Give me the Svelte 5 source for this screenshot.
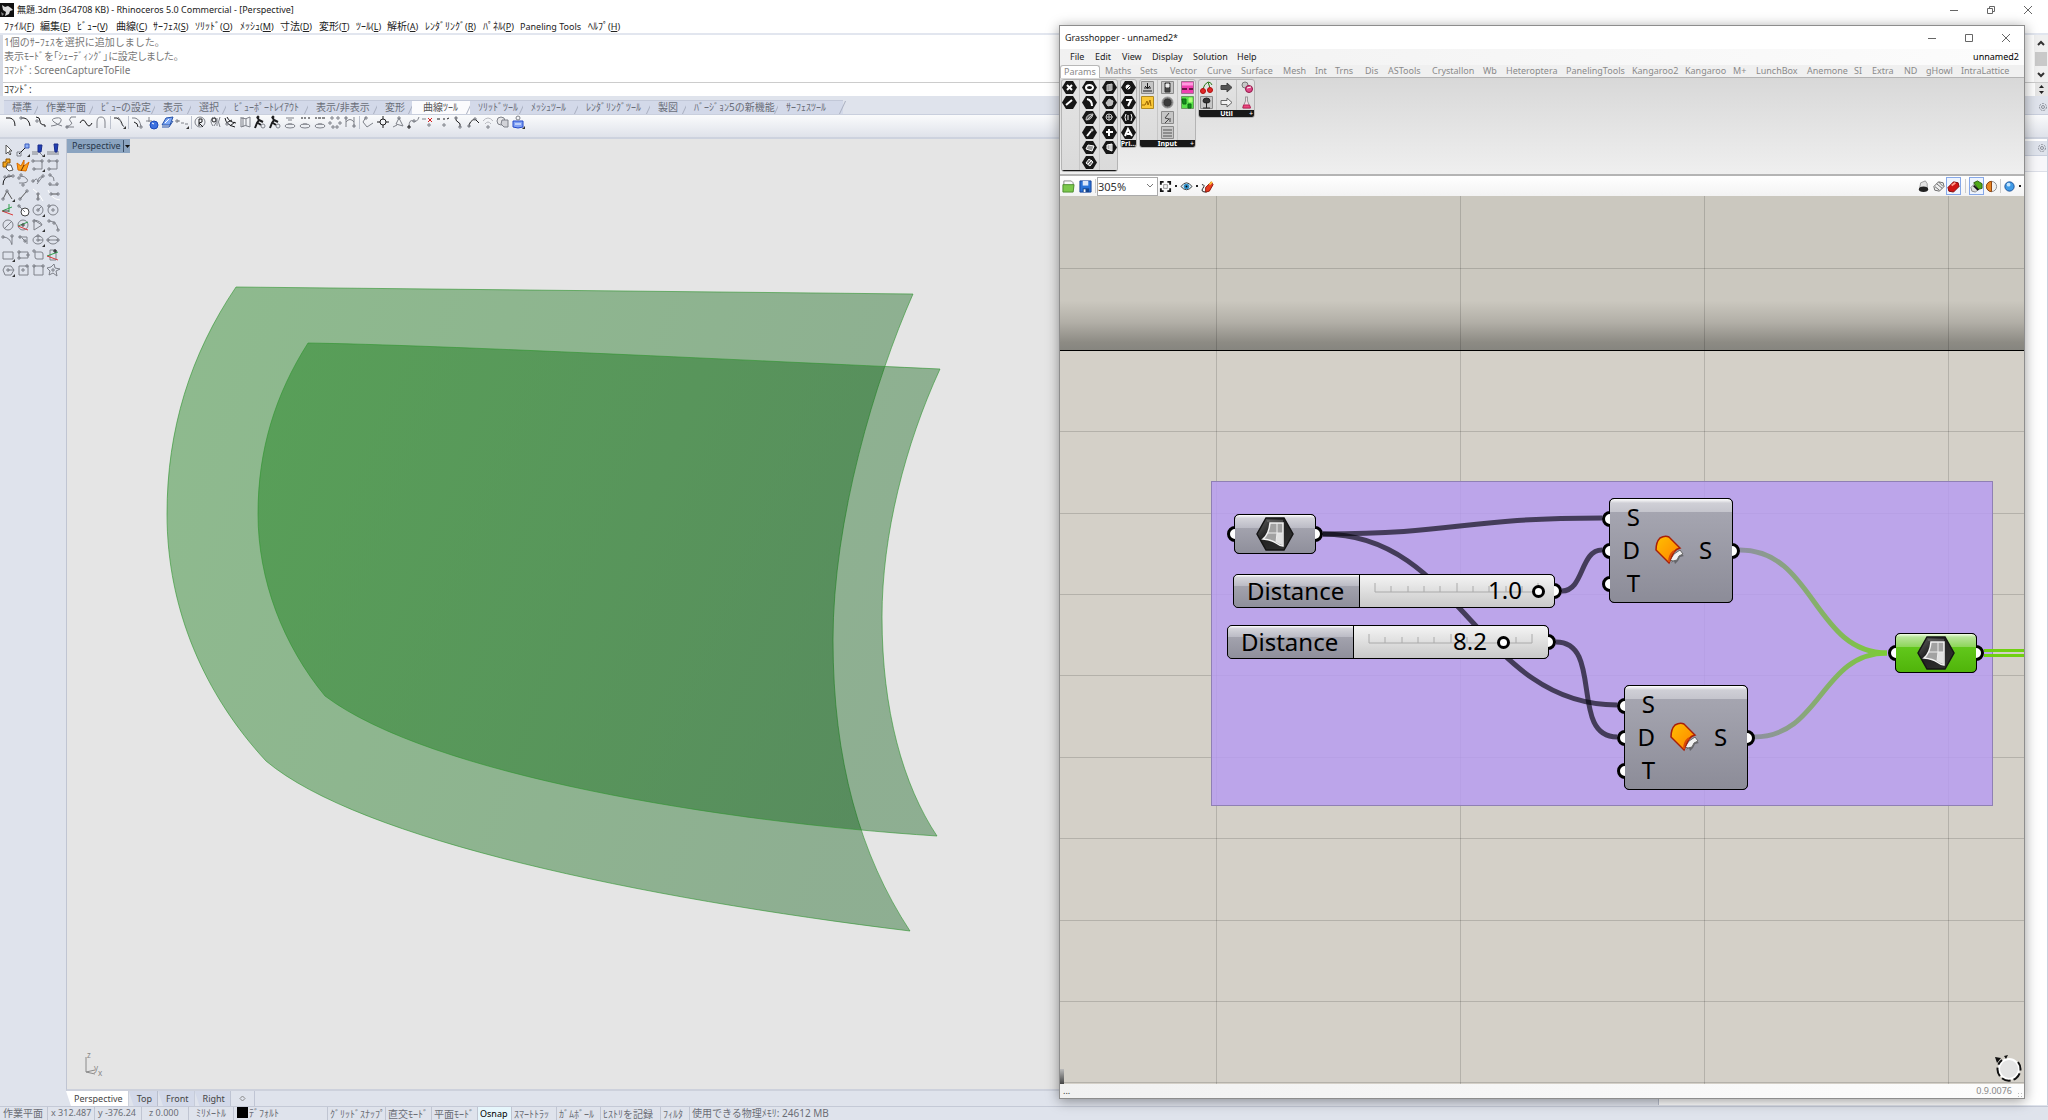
<script>
  const circ = (x, y, r) => `M${x - r} ${y}a${r} ${r} 0 1 0 ${2 * r} 0a${r} ${r} 0 1 0 ${-2 * r} 0`;
  const sq = (x, y, r = 1) => `M${x - r} ${y - r}h${2 * r}v${2 * r}h${-2 * r}z`;
  const G = '#7e8189';
  const K = '#1c1c1e';
  const corner = ['M14 11v3h-3z', 'none', '#333'];

  const mainMenu = [
    ['ﾌｧｲﾙ', 'F', 36], ['編集', 'E', 37], ['ﾋﾞｭｰ', 'V', 39], ['曲線', 'C', 37], ['ｻｰﾌｪｽ', 'S', 42],
    ['ｿﾘｯﾄﾞ', 'O', 45], ['ﾒｯｼｭ', 'M', 40], ['寸法', 'D', 39], ['変形', 'T', 37], ['ﾂｰﾙ', 'L', 31],
    ['解析', 'A', 38], ['ﾚﾝﾀﾞﾘﾝｸﾞ', 'R', 58], ['ﾊﾟﾈﾙ', 'P', 37], ['', 'Paneling Tools', 68], ['ﾍﾙﾌﾟ', 'H', 40]
  ];

  const toolTabs = [
    ['標準', 34], ['作業平面', 55], ['ﾋﾞｭｰの設定', 62], ['表示', 36], ['選択', 35],
    ['ﾋﾞｭｰﾎﾟｰﾄﾚｲｱｳﾄ', 82], ['表示/非表示', 69], ['変形', 35], ['曲線ﾂｰﾙ', 58],
    ['ｿﾘｯﾄﾞﾂｰﾙ', 53], ['ﾒｯｼｭﾂｰﾙ', 55], ['ﾚﾝﾀﾞﾘﾝｸﾞﾂｰﾙ', 72], ['製図', 36],
    ['ﾊﾞｰｼﾞｮﾝ5の新機能', 92], ['ｻｰﾌｪｽﾂｰﾙ', 65]
  ];

  const arc = ['M2 3h4q5 1 5 8', K];
  const curveTools = [
    [arc], [['M2 3h3q5 1 6 8', K], [sq(2, 3), G]],
    [['M2 2q4 0 4 4t5 4v2', K], [sq(3, 6), G]],
    [['M2 11q9-1 10-5t-5-3-2 4 8 4', G]],
    [['M12 2H7q-3 3 0 5t-5 5h8', G], [sq(3, 12), G]],
    [['M1 8q3-6 6 0t6 0', K]],
    [['M3 13V7q0-5 4-5t4 5v6', G]],
    null,
    [['M2 3h3q4 1 6 8', K], ['M6 2l3 4M9 8l3 4', G], corner],
    null,
    [['M2 3h3q5 1 6 9', G], ['M4 7q4 1 4 5', K], [sq(11, 12), G]],
    [[circ(9, 10, 4), '#1c48b8', '#3c70e0'], ['M4 2v5M1 6h6', G], ['M7 8l2 1', '#fff']],
    [['M2 10l4-7 7-1-3 8z', '#2450a8', '#7ea8f4'], ['M2 12h7l4-6', '#2450a8'], ['M5 8l4-4', '#fff']],
    [['M2 6h3M6 8h3M10 9h3', G], [sq(2, 6), G], corner],
    null,
    [[circ(7, 7, 5), G], ['M6 11V4h3v3l-3 1 4 4', K]],
    [['M6 2q5 2 0 9M5 2q-4 4 0 9', G], [circ(6, 5, 2), K], ['M9 3v8M12 2q-3 5 0 10', G]],
    [['M2 3q1 7 10 9M4 2q2 5 9 6M3 8l6-3M7 11l5-4', K], [sq(4, 9), G]],
    [['M3 2v10M5 2v10M3 3q5 2 9-1v10q-5-3-9 0M8 3v8', G]],
    [['M4 2l2 3-2 3-2 5M6 5l4 2M5 8l3 2', K, 'none', 2], [circ(10, 11, 2), G], [circ(5, 2, 1), K, K]],
    [['M4 2l2 3-2 3-2 5M6 5l4 2M5 8l3 2', K, 'none', 2], [circ(10, 11, 2), G], [circ(5, 2, 1), K, K]],
    [['M3 3h8M5 5h4', G], ['M2 11a5 2 0 1 0 10 0a5 2 0 1 0-10 0M5 9h4', G]],
    [['M3 3h2M6 3h2M10 3h2', K], ['M2 11a5 2 0 1 0 10 0a5 2 0 1 0-10 0M5 9h4', G]],
    [['M2 3h2M5 3h3M9 3h3', K], ['M2 11a5 2 0 1 0 10 0a5 2 0 1 0-10 0M5 9h4', G]],
    [[sq(4, 3), G], [sq(10, 3), G], [sq(2, 8), G], [sq(12, 8), G], [sq(5, 12), G], [sq(9, 12), G]],
    [['M3 2v10M11 2v10M3 7q4-5 8 0', G], [sq(3, 3), G], [sq(11, 11), G]],
    null,
    [['M5 2L2 7l4 5 6-4', G], [sq(5, 3), G]],
    [[circ(7, 7, 3), K], ['M1 7h3M10 7h3M7 1v3M7 10v3', K]],
    [['M8 3L5 9l7 2zM2 12l4-2', G], [sq(8, 3), G]],
    [['M3 12q0-8 4-6t6-4', G], [sq(3, 12), K], [sq(8, 6), G]],
    [['M1 4h4', G], [sq(8, 10), G], ['M7 3l4 4M11 3l-4 4', '#d81c1c']],
    [['M1 4h3M7 4h2M11 4l2-1', K], [sq(8, 10), G]],
    [['M5 2q-1 4 2 5t2 5', K], [sq(5, 3), G], [sq(9, 12), G]],
    [['M3 12q0-6 6-8l4 4', K], [sq(3, 11), G], [sq(9, 4), G]],
    [['M2 6q5-6 10 0M4 9q3-4 6 0', '#b8bac0'], [sq(7, 12), G]],
    [[circ(5, 6, 4), G, '#e8e8ea'], ['M6 5h6v7H8l-3-3z', G, '#d2d3d8']],
    [['M2 6h10v6q-5 2-10 0z', '#2448c8', '#7fa0f4'], ['M4 9h6', '#fff'], [circ(7, 3, 2), G], corner]
  ];

  const sideTools = [
    [['M5 2v9l2-2 2 3 1-1-2-3h3z', '#555', '#fff']],
    [['M3 11l7-7', K], ['M9 1h4v4H9z', '#3a5cc0', '#8fb0f4'], [sq(3, 11, 2), G], corner],
    [['M1 9h7l4 4M1 11h6', G], ['M7 2h4l-1 7H7z', '#1a2a88', '#1f3fb4'], corner],
    [['M1 9h12M1 11h12', G], ['M8 1h4l-1 8H9z', '#1a2a88', '#1f3fb4']],
    [['M2 4h3V1h4v4H6v4H2z', '#8a5200', '#f4a51c'], ['M6 7h4l2 5-4 1-3-3z', '#555', '#fff']],
    [['M2 12L1 5l4 3 3-6v6l5-4-3 9z', '#d86a00', '#ffa014'], ['M5 13l3-6', '#663300']],
    [['M2 3h9v8H3', G], [sq(2, 3), G], [sq(11, 3), G], [sq(3, 11), G], corner],
    [['M3 3h8v8H3', G], [sq(3, 3), G], [sq(11, 3), G], [sq(3, 11), G]],
    [['M2 12q0-9 9-9', K], [sq(4, 4), G], [sq(12, 3), G], [sq(8, 3), G]],
    [['M3 10h5q5-1 3-4t-7-3', G], [sq(3, 5), G], [sq(7, 12), G], [sq(5, 2), G]],
    [['M2 9q4-6 5 0 0-6 5-5M6 11l6-8', G], [sq(2, 8), G], [sq(12, 3), G]],
    [['M4 2q5 2 4 6M3 12h9', G], [sq(4, 2), G], [sq(4, 11), G], [sq(11, 11), G]],
    [['M2 11l4-8 5 8', '#555'], [sq(2, 11), G], [sq(6, 3), G], corner],
    [['M4 11l7-8', '#555'], [sq(4, 11), G], [sq(11, 3), G]],
    [['M2 1q6 3 10 12', '#fff'], ['M7 5v7', '#555'], [sq(7, 6), G], [sq(7, 11), G]],
    [['M2 2q3 9 12 10', '#fff'], ['M5 6h7', '#555'], [sq(5, 6), G], [sq(12, 6), G]],
    [['M1 8l10-4M8 1v8', '#2f9e4a'], ['M1 8l11 4', '#d83a3a'], ['M2 8h6', '#444']],
    [[circ(9, 9, 4), '#444', '#fff'], ['M2 2l7 7', G], [sq(3, 3), G]],
    [[circ(7, 7, 5), G], ['M7 7l4-4', G], [sq(7, 7), G], corner],
    [[circ(7, 7, 5), G], [sq(7, 7), G], [sq(3, 3), G]],
    [[circ(7, 7, 5), G], ['M3 11l8-8', G]],
    [[circ(7, 7, 5), G], ['M2 8l10-4', '#2f9e4a'], ['M2 8l10 4', '#d83a3a'], [sq(7, 7), '#444']],
    [['M3 2v10l8-5zM3 2q7 1 8 5', G], [sq(3, 3), G], corner],
    [['M3 3q8 0 9 9', G], [sq(3, 3), G], [sq(8, 5), G], [sq(12, 12), G]],
    [['M2 4q7 0 9 8M11 3v8', G], [sq(11, 3), G], [sq(2, 4), G]],
    [['M3 4h8v7M6 5l4 4', G], [sq(4, 4), G], [sq(9, 8), G]],
    [['M2 7a5 4 0 1 0 10 0a5 4 0 1 0-10 0M7 7h5', G], [sq(7, 7), G], [sq(7, 3), G], corner],
    [['M2 7a5 4 0 1 0 10 0a5 4 0 1 0-10 0M2 7h10', G], [sq(2, 7), G], [sq(12, 7), G]],
    [['M2 4h10v7H2z', G], corner],
    [['M3 4h9v6H3z', G], [sq(3, 4), G], [sq(12, 7), G], [sq(3, 10), G]],
    [['M4 4h6q2 0 2 2v5H6q-2 0-2-2z', G], [sq(3, 3), G]],
    [['M4 2h6v10H4z', G], ['M1 8l11-4', '#2f9e4a'], ['M1 8l11 4', '#d83a3a'], [sq(9, 3), K]],
    [['M4 3h6l3 4-3 5H4L2 7z', G], ['M7 7h6', G], [sq(7, 7), G], corner],
    [['M3 3h9v9H3z', G], [sq(7, 7), G], [sq(11, 3), G]],
    [['M3 3h9v9H3z', G], [sq(3, 3), G], [sq(12, 3), G]],
    [['M8 1l1 4 5 1-4 2 1 5-4-3-4 2 1-4-3-3 4-1z', G], [sq(7, 7), G]]
  ];

  const viewTabs = ['Top', 'Front', 'Right'];
  const status = [
    ['作業平面', 48], ['x 312.487', 47], ['y -376.24', 47], ['z 0.000', 47, 'mid'], ['ﾐﾘﾒｰﾄﾙ', 45, 'mid']
  ];
  const modes = [
    ['ｸﾞﾘｯﾄﾞｽﾅｯﾌﾟ', 58], ['直交ﾓｰﾄﾞ', 46], ['平面ﾓｰﾄﾞ', 46], ['Osnap', 34, 'on'], ['ｽﾏｰﾄﾄﾗｯ', 45],
    ['ｶﾞﾑﾎﾞｰﾙ', 44], ['ﾋｽﾄﾘを記録', 60], ['ﾌｨﾙﾀ', 29]
  ];

  const ghMenu = [['File', 25], ['Edit', 27], ['View', 30], ['Display', 41], ['Solution', 44], ['Help', 30]];
  const ghTabs = [
    ['Maths', 35], ['Sets', 30], ['Vector', 37], ['Curve', 34], ['Surface', 42], ['Mesh', 32], ['Int', 20],
    ['Trns', 30], ['Dis', 23], ['ASTools', 44], ['Crystallon', 51], ['Wb', 23], ['Heteroptera', 60],
    ['PanelingTools', 66], ['Kangaroo2', 53], ['Kangaroo', 48], ['M+', 23], ['LunchBox', 51], ['Anemone', 47],
    ['SI', 18], ['Extra', 32], ['ND', 22], ['gHowl', 35], ['IntraLattice', 54]
  ];

  const W = '#fff';
  const L = '#c8c8c8';
  const hexes = {
    x: [['M5 5l5 5M10 5l-5 5', W, 'none', 2]],
    line: [['M4 10l6-5', W, 'none', 2]],
    ring: [['M4 7.5a3.5 2.5 0 1 0 7 0a3.5 2.5 0 1 0-7 0', W, 'none', 2]],
    arc: [['M5 4q5 1 5 7', W, 'none', 2]],
    leaf: [['M4 10q0-6 7-6-1 6-7 6zM5 10l5-5', L, '#666']],
    key: [['M5 11l4-5', W, 'none', 2], [circ(10, 5, 1), W]],
    plane: [['M4 9l2-4 6 1-2 5z', W, '#999']],
    diamond: [['M7 4l4 3-3 4-4-3zM6 9l4-4', W, '#777']],
    box: [['M5 5l5-1v6l-5 1zM8 4v7', L, '#999']],
    brep: [['M4 8l3-4 4 2-1 4-4 1z', L, '#bbb']],
    mesh: [[circ(7, 7, 3), L], ['M4 7h7M7 4v7', L]],
    plus: [['M7 4v7M4 7h7', W, 'none', 2]],
    srf: [['M5 5l5-1v7l-5-2zM8 4v6', W, '#aaa']],
    bool: [[circ(7, 7, 2), W, W], ['M6 9l4-4', '#111']],
    seven: [['M5 5h5l-3 6', W, 'none', 2]],
    dom: [['M5 4q-2 3 0 7M10 4q2 3 0 7M7 5v5', W]],
    angle: [['M4 11l3-7 4 7M6 9h4', W, 'none', 2]]
  };
  const frame = ['M1.5 1.5h12v12h-12z', '#8c8c8c', '#c6c6c6'];
  const tile = {
    slider: [frame, ['M4 8h7M7.5 3v5M5 6l2.500 2.500 2.500-2.500M3 11h9', K]],
    swatch: [['M1.500 1.500h12v12h-12z', '#b08a20', '#fac838'], ['M2 10h3l2-4 1 4 2-5 1 6', '#9a6400']],
    toggle: [frame, ['M5 3h5v9H5z', '#333', '#444'], ['M6 4h3v3H6z', '#eee', '#eee']],
    knob: [[circ(7.5, 7.5, 5.5), '#999', '#777'], [circ(7.5, 7.5, 3.5), '#333', '#3a3a3a']],
    pick: [frame, ['M9 3L5 8l4 1-4 4M10 8v4', '#444']],
    list: [frame, ['M3 5h9M3 8h9M3 11h9', '#555']],
    grad: [['M1.500 1.500h12v12h-12z', '#a07090', '#f040b0'], ['M2 4h11', '#ff9adf', 'none', 3], ['M2 9h5M9 9h4', '#70104a', 'none', 2]],
    image: [['M1.500 1.500h12v12h-12z', '#6c9a60', '#58e048'], ['M2 4h4v5H3z', '#0a6a10', '#138c1a'], ['M9 3h3v4H9z', '#a0ff70', '#b6ff80'], ['M8 9h3v4H8z', '#0a6a10', '#138c1a']],
    cherry: [['M4 9q1-5 5-7l2 6M9 2q3 0 4 3', '#2c7a1c'], [circ(4, 11, 2.5), '#b01010', '#e02828'], [circ(11, 10, 2.5), '#b01010', '#e02828']],
    tree: [frame, ['M7.500 7v6M4 6q0-3 3.500-3T11 6q0 2-3.500 2T4 6z', '#222', '#333'], ['M4 13h7', '#222']],
    arrow: [['M2 5.500h6V3l5 4.500-5 4.500V9.500H2z', '#444', '#555']],
    outline: [['M2 5.500h6V3l5 4.500-5 4.500V9.500H2z', '#666', '#f2f2f2']],
    pills: [[circ(6, 5, 3), '#777', '#c8c8c8'], [circ(10, 9, 3.5), '#901848', '#e04888'], ['M8 8l4-1', '#fff']],
    flask: [['M6 2h3M6.500 2v4l-3 7h8l-3-7V2', '#999', '#f4dce6'], ['M4.500 10h6l1 3H4z', '#c02058', '#e8487c']]
  };
  const panels = [
    { name: '', clipped: true, cols: [['x', 'line'], ['ring', 'arc', 'leaf', 'key', 'plane', 'diamond'], ['box', 'brep', 'mesh', 'plus', 'srf']] },
    { name: 'Pri…', cols: [['bool', 'seven', 'dom', 'angle']] },
    { name: 'Input', more: true, cols: [['slider', 'swatch'], ['toggle', 'knob', 'pick', 'list'], ['grad', 'image']] },
    { name: 'Util', more: true, cols: [['cherry', 'tree'], ['arrow', 'outline'], ['pills', 'flask']] }
  ];

  let d1 = $state(1.0);
  let d2 = $state(8.2);
  let zoom = $state('305%');
  const sliders = $derived([
    { id: 'dist-a', max: 1, value: d1, set: (v) => (d1 = v) },
    { id: 'dist-b', max: 10, value: d2, set: (v) => (d2 = v) }
  ]);
  const rows = [72, 154, 235, 317, 398, 479, 561, 642, 724, 805, 886];
  const columns = [156, 400, 644, 888];
</script>

{#snippet icon(shapes)}
  <svg class="ic" viewBox="0 0 15 15" aria-hidden="true">
    {#each shapes as [d, s, f, w]}
      <path {d} stroke={s} fill={f ?? 'none'} stroke-width={w ?? 1} />
    {/each}
  </svg>
{/snippet}

{#snippet surfaceHex()}
  <svg class="hex" viewBox="0 0 38 34" aria-hidden="true">
    <path d="M10 1h18l9 16-9 16H10L1 17z" fill="url(#hexFill)" stroke="#151515" stroke-width="1.5" />
    <path d="M11 4h16" fill="none" stroke="#777" stroke-width="1" />
    <path d="M14 6h13v23q-3 0-7-3t-13-4q6-5 7-16z" fill="#a2a2a2" stroke="#f4f4f4" stroke-width="1.5" />
    <path d="M21 16h5v12q-3-1-6-3z" fill="#e2e2e2" />
    <path d="M21 6v10l-1 9M12 16h15" fill="none" stroke="#ececec" stroke-width="1" />
  </svg>
{/snippet}

{#snippet offset(cls)}
  <div class="node comp {cls}">
    <span class="port in p1"></span><span class="port in p2"></span><span class="port in p3"></span>
    <div class="params"><span>S</span><span>D</span><span>T</span></div>
    <svg class="orange" viewBox="0 0 30 30" aria-hidden="true">
      <path d="M17 28l4-6 5-4 4 3-4 1-2 4-3 3-1-3z" fill="#333" opacity=".5" />
      <path d="M16 25l4-6 6-4 3 4-4 2-2 4-4 1z" fill="#f2f2f2" stroke="#666" stroke-width="1" />
      <path d="M6 3q5-3 9-1l11 11q-4 1-6 4t-5 11L2 15q0-8 4-12z" fill="url(#orangeFill)" stroke="#a81f08" stroke-width="1.5" />
      <path d="M15 27q0-7 5-11" fill="none" stroke="#d84a08" stroke-width="2" />
    </svg>
    <span class="result">S</span>
    <span class="port out p2"></span>
  </div>
{/snippet}

{#snippet winButtons(max)}
  <div class="winbtns">
    <button aria-label="Minimize"><svg viewBox="0 0 10 10"><path d="M1 5.500h8" /></svg></button>
    <button aria-label="Maximize">
      <svg viewBox="0 0 10 10">
        {#if max}<path d="M1.500 1.500h7v7h-7z" />{:else}<path d="M1.500 3.500h5v5h-5zM3.500 3.500v-2h5v5h-2" />{/if}
      </svg>
    </button>
    <button aria-label="Close"><svg viewBox="0 0 10 10"><path d="M1 1l8 8M9 1l-8 8" /></svg></button>
  </div>
{/snippet}

{#snippet gear()}
  <button class="gear" aria-label="Options">
    <svg viewBox="0 0 10 10"><circle cx="5" cy="5" r="3.500" stroke-dasharray="2 1" /><circle cx="5" cy="5" r="1.500" /></svg>
  </button>
{/snippet}

<div class="rhino">
  <header class="title">
    <svg class="logo" viewBox="0 0 14 14" aria-hidden="true">
      <path d="M0 0h14v14H0z" fill="#111" />
      <path d="M2 2l3 2 3-1 3 2 2 2-3 1-1 3-4 2 1-4-3-2z" fill="#ddd" /><path d="M1 9l3 2-2 2z" fill="#888" />
    </svg>
    <span>無題.3dm (364708 KB) - Rhinoceros 5.0 Commercial - [Perspective]</span>
    {@render winButtons(false)}
  </header>
  <nav class="menu">
    {#each mainMenu as [name, key, w]}
      <button style:width="{w}px">{name}{#if name}<small>(<u>{key}</u>)</small>{:else}<small>{key}</small>{/if}</button>
    {/each}
  </nav>

  <section class="command">
    <div class="history">
      <div class="log">
        <p>1個のｻｰﾌｪｽを選択に追加しました。</p>
        <p>表示ﾓｰﾄﾞを「ｼｪｰﾃﾞｨﾝｸﾞ」に設定しました。</p>
        <p>ｺﾏﾝﾄﾞ: ScreenCaptureToFile</p>
      </div>
      <div class="scroll"><svg viewBox="0 0 10 6"><path d="M2 5l3-3 3 3" /></svg><i></i><svg viewBox="0 0 10 6"><path d="M2 1l3 3 3-3" /></svg></div>
    </div>
    <div class="prompt">
      <label for="cmd">ｺﾏﾝﾄﾞ:</label><input id="cmd" autocomplete="off" />
      <div class="spin"><svg viewBox="0 0 7 5"><path d="M1 4l2.500-3L6 4z" /></svg><svg viewBox="0 0 7 5"><path d="M1 1l2.500 3L6 1z" /></svg></div>
    </div>
  </section>

  <nav class="tooltabs">
    {#each toolTabs as [name, w], i}
      <button class:active={i === 8} style:width="{w}px">{name}</button>
    {/each}
    <span class="grow"></span>{@render gear()}
  </nav>
  <div class="toolbar">
    {#each curveTools as t}
      {#if t}<button class="tool" aria-label="Curve tool">{@render icon(t)}</button>{:else}<i class="sep"></i>{/if}
    {/each}
  </div>

  <main class="work">
    <aside class="side">
      {#each sideTools as t}<button class="tool" aria-label="Tool">{@render icon(t)}</button>{/each}
    </aside>
    <section class="center">
      <div class="viewport">
        <button class="vname"><span>Perspective</span><svg viewBox="0 0 7 14"><path d="M.500 1v12" stroke="#3c5068" /><path d="M2 6h5L4.500 9z" fill="#111" /></svg></button>
        <svg class="scene" viewBox="0 0 890 800" aria-hidden="true">
          <defs>
            <linearGradient id="srfFill" x1="0" y1=".2" x2="1" y2=".5"><stop offset="0" stop-color="#007400" /><stop offset=".5" stop-color="#006604" /><stop offset="1" stop-color="#00560a" /></linearGradient>
          </defs>
          <g fill="url(#srfFill)" fill-opacity=".382" stroke="#2f942f" stroke-opacity=".6">
            <path d="M169 148L846 155C808 241 766 381 766 501C766 621 793 716 843 792C573 759 293 701 199 622C138 556 100 471 100 375C100 291 123 216 169 148z" />
            <path d="M241 204C373 206 693 222 873 230C838 306 815 396 815 478C815 571 836 646 870 697C653 683 363 636 258 557C216 506 191 441 191 375C191 311 208 256 241 204z" />
          </g>
        </svg>
        <svg class="axes" viewBox="0 0 24 40" aria-hidden="true">
          <path d="M3 17v15l9-2M3 32l9 2" fill="none" stroke="#8a8a8a" />
          <text x="4" y="18">z</text><text x="11" y="31">y</text><text x="15" y="36">x</text>
        </svg>
      </div>
      <nav class="viewtabs">
        <button class="active">Perspective</button>
        {#each viewTabs as v}<button>{v}</button>{/each}
        <button class="add" aria-label="New viewport"><svg viewBox="0 0 7 9"><path d="M3.500 2L6 4.500 3.500 7 1 4.500z" /></svg></button>
      </nav>
    </section>
    <aside class="props"><div class="phead">{@render gear()}</div><div class="psub"></div></aside>
  </main>

  <footer class="status">
    {#each status as [t, w, c]}<span class={c} style:width="{w}px">{t}</span>{/each}
    <span class="layer"><i></i>ﾃﾞﾌｫﾙﾄ</span>
    {#each modes as [t, w, c]}<button class={c} style:width="{w}px">{t}</button>{/each}
    <span>使用できる物理ﾒﾓﾘ: 24612 MB</span>
  </footer>

  <section class="gh">
    <header class="ghtitle"><span>Grasshopper - unnamed2*</span>{@render winButtons(true)}</header>
    <nav class="ghmenu">
      {#each ghMenu as [t, w]}<button style:width="{w}px">{t}</button>{/each}
      <span class="grow"></span><span class="doc">unnamed2</span>
    </nav>
    <nav class="ghtabs">
      <button class="active">Params</button>
      {#each ghTabs as [t, w]}<button style:width="{w}px">{t}</button>{/each}
    </nav>
    <div class="ribbon">
      {#each panels as p}
        <div class="panel">
          <div class="cols">
            {#each p.cols as col}
              <div class="col">
                {#each col as n}
                  <button class="tool" aria-label={n}>
                    {#if tile[n]}{@render icon(tile[n])}{:else}{@render icon([['M4 1h7l4 6.500-4 6.500H4L0 7.500z', 'none', '#161616'], ...hexes[n]])}{/if}
                  </button>
                {/each}
              </div>
            {/each}
          </div>
          <div class="pname" class:clipped={p.clipped}><b>{p.name}</b>{#if p.more}<em>+</em>{/if}</div>
        </div>
      {/each}
    </div>
    <div class="ghbar">
      <button class="big open" aria-label="Open">
        <svg viewBox="0 0 14 14"><path d="M2 1h8l2 2v6H2z" fill="#f8f8f8" stroke="#888" /><path d="M1 5h12l-1 8H1z" fill="#7cc84c" stroke="#4a8a2a" /></svg>
      </button>
      <button class="big" aria-label="Save">
        <svg viewBox="0 0 14 14"><path d="M1 1h12v12H1z" fill="#2a74d8" stroke="#123f94" /><path d="M4 1h6v5H4z" fill="#dce8fa" /><path d="M4 9h7v4H4z" fill="#14448c" /><path d="M5 10h2v3H5z" fill="#fff" /></svg>
      </button>
      <i class="vsep tight"></i>
      <div class="zoom">
        <select aria-label="Zoom" bind:value={zoom}><option>305%</option><option>100%</option></select>
        <svg viewBox="0 0 8 6" aria-hidden="true"><path d="M1 1l3 3 3-3" /></svg>
      </div>
      <button class="big" aria-label="Zoom extents">
        <svg viewBox="0 0 14 14"><path d="M2 5V2h3M9 2h3v3M12 9v3H9M5 12H2V9" fill="none" stroke="#111" stroke-width="2" /><path d="M5 5h4v4H5z" fill="none" stroke="#333" stroke-dasharray="1 1" /></svg>
      </button><b class="dot"></b>
      <button class="big" aria-label="Preview">
        <svg viewBox="0 0 14 14"><path d="M1 7q6-8 12 0-6 7-12 0z" fill="#dff0fa" stroke="#333" /><circle cx="7" cy="7" r="3" fill="#2f8fc8" /><circle cx="7" cy="7" r="1" /></svg>
      </button><b class="dot"></b>
      <button class="big" aria-label="Sketch">
        <svg viewBox="0 0 14 14"><path d="M1 5q4 0 1 4t4 4" fill="none" stroke="#111" /><path d="M5 8l6-6 2 3-4 7-4 1z" fill="#e83c20" stroke="#8a1408" /><path d="M9 5l3-3" stroke="#ffc23a" stroke-width="2" /></svg>
      </button>
      <span class="grow"></span>
      <button class="big" aria-label="No preview">
        <svg viewBox="0 0 14 14"><path d="M3 8l1-5 5-2 2 3v5z" fill="#e4e4e4" stroke="#999" /><ellipse cx="7" cy="10" rx="5" ry="3" fill="#222" /></svg>
      </button>
      <button class="big" aria-label="Wireframe">
        <svg viewBox="0 0 14 14"><path d="M2 7l5-5 5 1 1 4-5 5-5-1zM5 4l6 5M3 7l5 4M7 2l5 5" fill="#eee" stroke="#666" /></svg>
      </button>
      <button class="big on" aria-label="Shaded">
        <svg viewBox="0 0 14 14"><path d="M1 8l6-6 5 1 1 4-6 6-5-1z" fill="#d01414" stroke="#7a0606" /><path d="M5 6l4-3" stroke="#ff9a8a" stroke-width="2" /></svg>
      </button>
      <i class="vsep"></i>
      <button class="big on" aria-label="Selected preview">
        <svg viewBox="0 0 14 14"><path d="M1 8l4-4 5 5-4 4-4-1z" fill="#ddd" stroke="#888" /><path d="M4 3l4-2 5 3v5l-4 1-2-3z" fill="#4fa818" stroke="#2a5c0a" /><path d="M4 6l5 5" stroke="#111" stroke-width="2" /></svg>
      </button>
      <button class="big" aria-label="Document preview">
        <svg viewBox="0 0 14 14"><circle cx="7" cy="7" r="5.500" fill="#f0f0f0" stroke="#888" /><path d="M7 1.500a5.500 5.500 0 0 0 0 11z" fill="#e88420" stroke="#8a3c08" /></svg>
      </button>
      <i class="vsep thin"></i>
      <button class="big" aria-label="Mesh quality">
        <svg viewBox="0 0 14 14"><circle cx="7" cy="7" r="5" fill="#3f9ae6" stroke="#1c4f94" /><circle cx="6" cy="5" r="2" fill="#c4e6ff" /></svg>
      </button><b class="dot"></b>
    </div>

    <div class="canvas">
      <div class="shade"></div>
      <svg class="grid" aria-hidden="true">
        {#each rows as y}<line x1="0" x2="100%" y1={y} y2={y} />{/each}
        {#each columns as x}<line x1={x} x2={x} y1="0" y2="100%" />{/each}
      </svg>
      <div class="group"></div>
      <svg class="wires" aria-hidden="true">
        <defs>
          <linearGradient id="w1" x1="0" x2="1"><stop offset="0" stop-color="#8e90a0" /><stop offset=".4" stop-color="#88a878" /><stop offset="1" stop-color="#7ccc34" /></linearGradient>
          <linearGradient id="hexFill" x1="0" y1="0" x2="1" y2="1"><stop offset="0" stop-color="#666" /><stop offset=".4" stop-color="#222" /><stop offset="1" stop-color="#333" /></linearGradient>
          <linearGradient id="orangeFill" x1="0" y1="0" x2="1" y2="1"><stop offset="0" stop-color="#ffc000" /><stop offset="1" stop-color="#ff8000" /></linearGradient>
        </defs>
        <g fill="none" stroke="#06060f" stroke-opacity=".66" stroke-width="5">
          <path d="M263 338C400 338 400 322 542 322" />
          <path d="M263 338C400 338 420 509 557 509" />
          <path d="M502 395C524 395 520 354 542 354" />
          <path d="M496 446C544 446 509 541 557 541" />
        </g>
        <g fill="none" stroke="url(#w1)" stroke-width="5">
          <path d="M680 354C754 354 754 457 827 457" />
          <path d="M694 541C761 541 761 457 827 457" />
        </g>
        <path d="M924 454.500H964M924 459.500H964" stroke="#70d012" stroke-width="3" />
      </svg>

      <div class="node param n1"><span class="port in"></span>{@render surfaceHex()}<span class="port out"></span></div>
      {#each sliders as s, i}
        <div class="node slider s{i}">
          <label for={s.id}>Distance</label>
          <div class="track">
            <svg viewBox="0 0 176 16" aria-hidden="true"><path d="M6 4v9h163V4M88 4v9M22 7v6M39 7v6M55 7v6M71 7v6M104 7v6M120 7v6M137 7v6M153 7v6" /></svg>
            <input id={s.id} type="range" min="0" max={s.max} step="0.1" value={s.value} oninput={(e) => s.set(+e.currentTarget.value)} />
            <output for={s.id} style:right="{Math.round((1 - s.value / s.max) * 163) + 32}px">{s.value.toFixed(1)}</output>
          </div>
          <span class="port out"></span>
        </div>
      {/each}
      {@render offset('c1')}
      {@render offset('c2')}
      <div class="node param green n2"><span class="port in"></span>{@render surfaceHex()}<span class="port out"></span></div>

      <div class="edge"></div>
      <svg class="compass" viewBox="0 0 28 28" aria-hidden="true">
        <circle cx="15" cy="15" r="10" fill="#e4e4e4" stroke="#fff" stroke-width="2" />
        <path d="M24 8a11.500 11.500 0 1 1-16-2" fill="none" stroke="#111" stroke-width="2" stroke-dasharray="9 3" />
        <path d="M1 3l6 1-4 5zM10 2l4-1-2 4z" fill="#111" />
      </svg>
    </div>
    <footer class="ghstatus"><span>...</span><span class="grow"></span><span class="ver">0.9.0076</span><i></i></footer>
  </section>
</div>

<style>
  :global(body) { margin: 0; overflow: hidden; }
  .rhino {
    position: relative; height: 100vh; display: flex; flex-direction: column; overflow: hidden;
    background: #dfe3ec; color: #222; font: 9px/14px 'Noto Sans', 'Noto Sans CJK JP', sans-serif; white-space: nowrap;
  }
  button { border: 0; padding: 0; margin: 0; background: none; color: inherit; font: inherit; text-align: left; }
  p { margin: 0; }
  svg { display: block; flex: none; }
  .grow { flex: 1; }
  .ic { width: 15px; height: 15px; }
  .tool { width: 15px; height: 15px; display: block; }

  .title { height: 19px; background: #fff; display: flex; align-items: center; }
  .logo { width: 14px; height: 14px; margin-right: 3px; }
  .winbtns { margin-left: auto; display: flex; padding-right: 4px; }
  .winbtns button { width: 32px; height: 16px; display: grid; place-items: center; margin-left: 5px; }
  .winbtns svg { width: 10px; height: 10px; fill: none; stroke: #666; }
  .menu { height: 14px; background: #fff; display: flex; padding: 0 4px; border-bottom: 2px solid #e2e6ef; font-size: 10px; }
  .menu small { font-size: 9px; }

  .command, .tooltabs, .status { font-size: 10px; }
  .command { background: #fff; color: #777; border-left: 3px solid #d6dbe6; }
  .history { height: 47px; display: flex; justify-content: space-between; border-bottom: 1px solid #ccc; }
  .log { padding-left: 1px; line-height: 14px; }
  .log p:nth-child(2) { font-feature-settings: 'palt'; }
  .scroll { width: 14px; background: #f0f0f0; display: flex; flex-direction: column; align-items: center; justify-content: space-between; padding: 5px 0 4px; box-sizing: border-box; }
  .scroll svg { width: 10px; height: 6px; fill: none; stroke: #333; stroke-width: 2; }
  .scroll i { width: 12px; height: 14px; background: #c9c9c9; }
  .prompt { height: 13px; display: flex; color: #333; line-height: 12px; padding-left: 1px; }
  .prompt input { flex: 1; border: 0; outline: 0; padding: 0 4px; font: inherit; background: none; }
  .spin { width: 13px; display: flex; flex-direction: column; align-items: center; justify-content: space-around; background: #e6e6e6; }
  .spin svg { width: 7px; height: 5px; fill: #222; }

  .tooltabs { height: 14px; padding: 4px 0 0 4px; display: flex; border-bottom: 1px solid #c9cfdd; color: #6a6e78; background: #dfe3ec; }
  .tooltabs button:not(.active) { background: #d3d9e9; }
  .tooltabs > button { box-sizing: border-box; padding-left: 8px; position: relative; border-top: 1px solid #c2c8d8; height: 14px; line-height: 13px; flex: none; }
  .tooltabs > button::after { content: ''; position: absolute; right: 0; top: 0; width: 1px; height: 13px; background: #a9afbf; transform: skewX(-25deg); }
  .tooltabs > button.active { background: #fbfbfd; color: #555; padding-left: 11px; }
  .tooltabs > button.gear { border: 0; padding: 0; background: none; width: 10px; }
  .tooltabs > button.gear::after { display: none; }
  .gear svg { width: 10px; height: 10px; fill: none; stroke: #8c9099; }
  .toolbar { height: 19px; padding: 0 0 3px 4px; display: flex; background: linear-gradient(#fafbfc, #dfe2ea); border-bottom: 2px solid #cdd2de; }
  .sep { width: 1px; margin: 1px; height: 13px; background: #bcc1cd; }

  .work { flex: 1; min-height: 0; display: flex; }
  .side { width: 60px; padding: 4px 5px 0 1px; display: grid; grid-template-columns: repeat(4, 15px); align-content: start; }
  .center { flex: 1; display: flex; flex-direction: column; min-width: 0; }
  .viewport { flex: 1; min-height: 0; position: relative; background: #e5e5e5; border-left: 1px solid #c0c5d2; border-bottom: 2px solid #cdd1dc; overflow: hidden; }
  .vname { display: flex; height: 14px; background: #8ba4c0; color: #26364a; line-height: 14px; padding-left: 5px; width: 63px; box-sizing: border-box; justify-content: space-between; }
  .vname svg { width: 7px; height: 14px; }
  .scene { position: absolute; left: 0; top: 0; width: 890px; height: 800px; }
  .axes { position: absolute; left: 16px; bottom: 9px; width: 24px; height: 40px; font-size: 8px; fill: #888; overflow: visible; }
  .viewtabs { height: 15px; display: flex; line-height: 14px; color: #444; }
  .viewtabs button { background: #d3d9e9; padding: 0 5px 0 8px; border-right: 1px solid #b9bfce; clip-path: polygon(0 0, 100% 0, 100% 100%, 5px 100%); }
  .viewtabs .active { background: #fff; padding: 0 5px 0 8px; }
  .viewtabs .add { background: none; padding: 0 8px; color: #888; }
  .viewtabs svg { width: 7px; height: 9px; fill: none; stroke: #888; }
  .props { width: 388px; background: #fff; border-left: 1px solid #b9bfce; border-right: 1px solid #c9cfdd; margin-bottom: 1px; }
  .phead { height: 14px; margin-top: 2px; background: #dfe3ec; border-bottom: 1px solid #c9cfdd; display: flex; justify-content: flex-end; align-items: center; }
  .psub { height: 15px; background: #f7f7fa; border-bottom: 1px solid #dcdfe8; }

  .status { height: 13px; line-height: 12px; display: flex; color: #6b6e76; border-top: 1px solid #c4c9d6; }
  .status > * { box-sizing: border-box; border-right: 1px solid #c0c5d2; padding: 0 0 0 2px; flex: none; }
  .status > span:nth-child(-n + 4) { padding-left: 3px; }
  .status > span:nth-child(2), .status > span:nth-child(3), .status > span:nth-child(4) { font-size: 9px; }
  .status > span.mid { padding-left: 7px; }
  .status > .layer { width: 94px; display: flex; padding-left: 3px; }
  .status .layer i { width: 11px; height: 11px; background: #000; margin-right: 1px; }
  .status > .on { background: #e6f6fc; color: #000; font-size: 9px; }
  .status > :last-child { border: 0; }

  .gh {
    position: absolute; left: 1059px; right: 23px; top: 25px; bottom: 21px; display: flex; flex-direction: column;
    background: #f0f0f0; border: 1px solid #8d8d8d; box-sizing: border-box; box-shadow: 0 2px 12px rgba(0, 0, 0, .4);
  }
  .ghtitle { height: 23px; background: #fff; display: flex; align-items: center; padding-left: 5px; }
  .ghtitle .winbtns { padding-right: 2px; }
  .ghmenu { height: 16px; line-height: 16px; display: flex; padding: 0 5px 0 10px; background: linear-gradient(90deg, #f1f1f1, #fcfcfc); color: #222; }
  .ghmenu .doc { color: #000; }
  .ghtabs { height: 12px; line-height: 12px; display: flex; color: #8a8a8a; background: #f0f0f0; border-bottom: 1px solid #b4b4b4; }
  .ghtabs button { flex: none; }
  .ghtabs .active { width: 40px; margin-right: 5px; box-sizing: border-box; padding-left: 3px; background: #fff; border: 1px solid #b8b8b8; border-bottom: 0; border-radius: 3px 3px 0 0; height: 13px; line-height: 10px; }
  .ribbon { height: 98px; padding: 1px 1px 0; box-sizing: border-box; display: flex; align-items: flex-start; gap: 2px; background: linear-gradient(#d8d8d8, #efefef); border-bottom: 2px solid #b4b4b4; overflow: hidden; }
  .panel { border: 1px solid #b4b4b4; border-radius: 3px; background: linear-gradient(#e4e4e4, #dadada); overflow: hidden; flex: none; }
  .cols { display: flex; }
  .col + .col { border-left: 1px solid #c6c6c6; margin-left: 2px; padding-left: 2px; }
  .pname { height: 8px; background: #181818; color: #fff; font-size: 7px; line-height: 8px; text-align: center; margin: 0 -1px -1px; position: relative; }
  .pname.clipped { height: 2px; }
  .pname em { position: absolute; right: 2px; top: 0; font-style: normal; }
  .ghbar { height: 20px; display: flex; align-items: center; padding: 0 1px; background: linear-gradient(#fff, #f3f3f3); }
  .big { width: 15px; height: 18px; box-sizing: border-box; display: grid; place-items: center; }
  .big svg { width: 13px; height: 13px; }
  .big.open { margin-right: 2px; }
  .big.on { outline: 1px solid #86a8e8; outline-offset: -1px; background: #eef4fe; }
  .vsep { width: 1px; height: 14px; background: #ccc; margin: 0 3px 0 4px; }
  .vsep.tight { margin: 0 1px 0 2px; }
  .vsep.thin { margin: 0 1px; }
  .zoom { display: grid; align-items: center; width: 61px; }
  .zoom > * { grid-area: 1 / 1; }
  .zoom svg { width: 8px; height: 6px; fill: none; stroke: #777; justify-self: end; margin-right: 4px; pointer-events: none; }
  .zoom select { appearance: none; width: 100%; height: 19px; border: 1px solid #aaa; border-radius: 0; background: #fff; font: 11px 'Noto Sans', sans-serif; color: #333; padding: 0; }
  .dot { width: 2px; height: 2px; background: #222; margin: 0 2px; }

  .canvas { flex: 1; position: relative; overflow: hidden; background: #d4d0c8; font-size: 24px; line-height: 32px; color: #000; min-height: 0; }
  .canvas > * { position: absolute; box-sizing: border-box; }
  .shade { left: 0; right: 0; top: 0; height: 155px; background: linear-gradient(#cbc8bf 0 68%, #b2afa7 82%, #8d8b84 95%, #86857f); border-bottom: 1px solid #000; }
  .grid, .wires { left: 0; top: 0; width: 100%; height: 100%; }
  .grid line { stroke: #000; stroke-opacity: .15; stroke-width: 1; shape-rendering: crispEdges; }
  .group { left: 151px; top: 285px; width: 782px; height: 325px; background: rgba(183, 158, 240, .85); border: 1px solid #8f80b4; }
  .node { border: 1px solid #000; outline: 1px solid rgba(0, 0, 0, .6); outline-offset: -1px; border-radius: 5px; background: linear-gradient(#fff 0, #cfcfd6 4%, #c4c4cc 13%, #a5a5b0 13%, #8c8c98); }
  .port { position: absolute; width: 16px; height: 16px; box-sizing: border-box; border: 3px solid #000; border-radius: 50%; background: #fff; top: 50%; margin-top: -8px; }
  .in { left: -8px; clip-path: inset(0 8px 0 0); }
  .out { right: -8px; clip-path: inset(0 0 0 8px); }
  .param { width: 82px; height: 40px; display: grid; place-items: center; background: linear-gradient(#fff 0, #d4d4da 8%, #bcbcc6 33%, #a3a3ae 33%, #8f8f9b); }
  .param.green { background: linear-gradient(#f4ffe8 0, #b8e49a 8%, #8fd65c 33%, #62c81c 33%, #50b40a); }
  .hex { width: 38px; height: 34px; }
  .n1 { left: 174px; top: 318px; }
  .n2 { left: 835px; top: 437px; }
  .slider { width: 322px; height: 34px; display: flex; background: linear-gradient(#f4f4f4, #c9c9c9); }
  .s0 { left: 173px; top: 378px; }
  .s1 { left: 167px; top: 429px; }
  .slider label { width: 126px; box-sizing: border-box; padding-left: 13px; border-right: 1px solid #000; border-radius: 4px 0 0 4px; background: linear-gradient(#fff 0, #d4d4da 8%, #bcbcc6 33%, #a3a3ae 33%, #8f8f9b); }
  .track { flex: 1; position: relative; }
  .track > * { position: absolute; left: 9px; width: 176px; margin: 0; }
  .track svg { top: 4px; height: 16px; fill: none; stroke: #aaa; }
  .track input { top: 9px; height: 14px; appearance: none; background: none; }
  .track input::-webkit-slider-thumb { appearance: none; box-sizing: border-box; width: 13px; height: 13px; border: 3px solid #000; border-radius: 50%; background: #fff; }
  .track output { left: auto; width: auto; top: 0; line-height: 30px; pointer-events: none; }
  .comp { width: 124px; height: 105px; display: flex; align-items: center; padding-bottom: 2px; }
  .c1 { left: 549px; top: 302px; }
  .c2 { left: 564px; top: 489px; }
  .p1 { top: 20px; }
  .p2 { top: 52px; }
  .p3 { top: 85px; }
  .params { width: 30px; text-align: right; line-height: 33px; }
  .params span { display: block; height: 33px; }
  .orange { width: 30px; height: 30px; margin-left: 14px; }
  .result { margin-left: 15px; }
  .edge { left: 0; bottom: 0; width: 4px; height: 15px; background: linear-gradient(#bbb, #444); }
  .compass { right: 2px; bottom: 2px; width: 28px; height: 28px; }
  .ghstatus { height: 14px; display: flex; align-items: center; padding: 0 2px 0 3px; background: linear-gradient(90deg, #f1f1f1, #fcfcfc); color: #333; }
  .ghstatus .ver { color: #888; margin-right: 5px; }
  .ghstatus i { width: 5px; height: 5px; background: radial-gradient(#bbb 1px, transparent 1px) 0 0 / 3px 3px; margin-top: 7px; }
</style>
